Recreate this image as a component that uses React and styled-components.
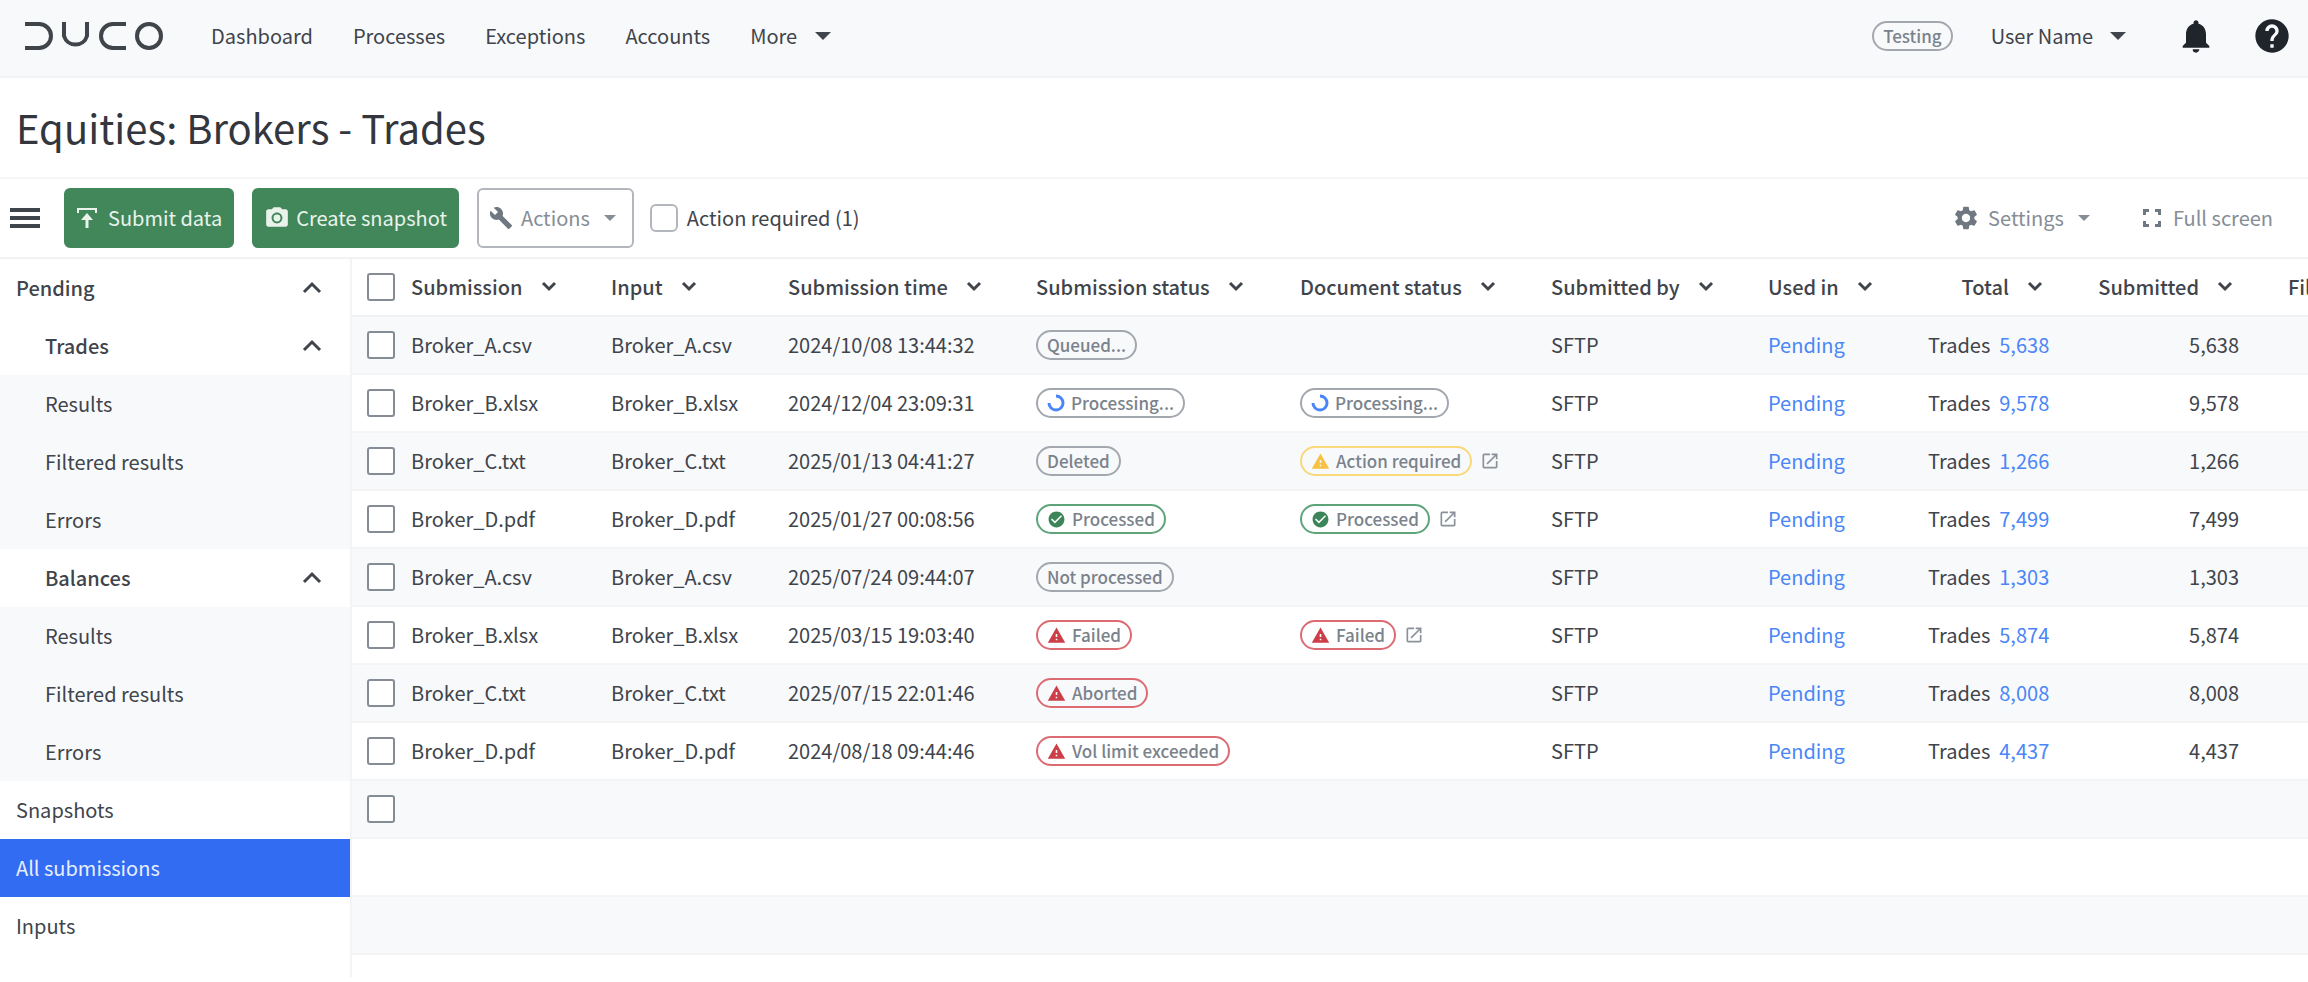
import React from "react";
import styled, { createGlobalStyle } from "styled-components";
import {
  MdNotifications,
  MdHelp,
  MdPhotoCamera,
  MdBuild,
  MdSettings,
  MdWarning,
  MdCheckCircle,
  MdOpenInNew,
} from "react-icons/md";

const GlobalStyle = createGlobalStyle`
  * {
    box-sizing: border-box;
  }
  body {
    margin: 0;
    background-color: #ffffff;
    color: #40444b;
    font-family: "Noto Sans CJK SC", "Noto Sans", sans-serif;
    font-size: 20px;
    line-height: 28px;
    overflow: hidden;
  }
  button, input {
    font: inherit;
    color: inherit;
  }
`;

const TopBar = styled.header`
  display: flex;
  align-items: center;
  height: 78px;
  padding: 0 16px 4px 24px;
  background-color: #f8f9fb;
  border-bottom: 2px solid #f0f2f4;
`;

const Logo = styled.svg`
  display: block;
  width: 140px;
  height: 30px;
  margin-right: 47px;
`;

const Nav = styled.nav`
  display: flex;
  align-items: center;
  gap: 40px;
  flex: 1;
`;

const NavLink = styled.a`
  color: inherit;
  text-decoration: none;
`;

const PlainButton = styled.button`
  display: flex;
  align-items: center;
  gap: ${(props) => props.$gap || 8}px;
  padding: 0;
  border: none;
  background: none;
  color: ${(props) => props.$color || "inherit"};
  cursor: pointer;
`;

const Caret = styled.span`
  margin-left: ${(props) => (props.$small ? 6 : 0)}px;
  border: ${(props) => (props.$small ? 6 : 8)}px solid transparent;
  border-top-color: currentColor;
  border-bottom: none;
`;

const UserArea = styled.div`
  display: flex;
  align-items: center;
  gap: 38px;
`;

const IconButtons = styled.div`
  display: flex;
  align-items: center;
  gap: 36px;
  margin-left: 12px;
  color: #20242b;
`;

const TitleBar = styled.div`
  padding: 24px 16px 25px;
  border-bottom: 2px solid #f5f6f8;
`;

const Title = styled.h1`
  margin: 0;
  font-size: 40px;
  line-height: 50px;
  font-weight: 400;
  color: #33373d;
`;

const Toolbar = styled.div`
  display: flex;
  align-items: center;
  height: 80px;
  padding: 0 35px 0 10px;
  border-bottom: 2px solid #f0f2f4;
`;

const MenuIcon = styled.svg`
  display: block;
  width: 30px;
  height: 22px;
`;

const ToolButtons = styled.div`
  display: flex;
  gap: 18px;
  margin: 0 16px 0 24px;
`;

const ToolButton = styled.button`
  display: flex;
  align-items: center;
  gap: ${(props) => props.$gap}px;
  height: 60px;
  padding: 0 ${(props) => (props.$outline ? 16 : 10)}px 0 10px;
  border: 2px solid ${(props) => (props.$outline ? "#b3b7bd" : "#42875a")};
  border-radius: 6px;
  background-color: ${(props) => (props.$outline ? "#ffffff" : "#42875a")};
  color: ${(props) => (props.$outline ? "#868d96" : "#e9f3ec")};
  cursor: pointer;
`;

const CheckLabel = styled.label`
  display: flex;
  align-items: center;
  gap: 9px;
  flex: 1;
`;

const Checkbox = styled.input.attrs({ type: "checkbox" })`
  appearance: none;
  display: block;
  width: 28px;
  height: 28px;
  margin: 0;
  border: 2px solid ${(props) => (props.$light ? "#b3b7bd" : "#858c95")};
  border-radius: ${(props) => (props.$light ? 6 : 3)}px;
  background-color: #ffffff;
  &:checked {
    background-color: #326cf3;
  }
`;

const ToolActions = styled.div`
  display: flex;
  gap: 53px;
`;

const Content = styled.div`
  display: flex;
  align-items: stretch;
`;

const Sidebar = styled.nav`
  flex: none;
  width: 352px;
  padding-bottom: 22px;
  border-right: 2px solid #f2f4f6;
`;

const SideLink = styled.a`
  display: flex;
  align-items: center;
  justify-content: space-between;
  height: 58px;
  padding: 0 26px 0 ${(props) => (props.$nested ? 45 : 16)}px;
  background-color: ${(props) =>
    props.$active ? "#326cf3" : props.$shaded ? "#f8f9fb" : "#ffffff"};
  color: ${(props) => (props.$active ? "#e8effe" : "inherit")};
  font-weight: ${(props) => (props.$heading ? 500 : 400)};
  text-decoration: none;
`;

const Chevron = styled.svg`
  display: block;
  width: ${(props) => props.$size}px;
  height: ${(props) => props.$size}px;
  fill: none;
  stroke: currentColor;
  stroke-width: ${(props) => props.$stroke};
`;

const TableArea = styled.main`
  flex: 1;
  min-width: 0;
  overflow: hidden;
`;

const Table = styled.table`
  width: 2080px;
  table-layout: fixed;
  border-collapse: separate;
  border-spacing: 0;
`;

const Row = styled.tr`
  background-color: ${(props) => (props.$shaded ? "#f8f9fb" : "#ffffff")};
`;

const HeadCell = styled.th`
  height: 58px;
  padding: 0;
  border-bottom: 2px solid #eff1f3;
  font-weight: 500;
  text-align: left;
  white-space: nowrap;
`;

const HeadLabel = styled.div`
  display: flex;
  align-items: center;
  justify-content: ${(props) => (props.$right ? "flex-end" : "flex-start")};
  gap: 12px;
`;

const Cell = styled.td`
  height: 58px;
  padding: 0;
  border-bottom: 2px solid #f2f4f6;
  text-align: ${(props) => (props.$right ? "right" : "left")};
  white-space: nowrap;
`;

const CheckWrap = styled.div`
  padding-left: 15px;
`;

const StatusLine = styled.div`
  display: flex;
  align-items: center;
  gap: 8px;
  color: #8a919a;
`;

const tones = {
  grey: "#a3a8af",
  green: "#5da47b",
  yellow: "#f9d879",
  red: "#dc6b74",
};

const Badge = styled.span`
  display: inline-flex;
  align-items: center;
  gap: 6px;
  height: 30px;
  padding: 0 9px;
  border: 2px solid ${(props) => tones[props.$tone || "grey"]};
  border-radius: 15px;
  color: #7a828b;
  font-size: 17px;
  line-height: 24px;
  font-weight: 500;
`;

const BlueLink = styled.a`
  color: #4a86f7;
  text-decoration: none;
`;

const Amount = styled.span`
  display: inline-flex;
  gap: 9px;
`;

const Spinner = () => (
  <svg width="18" height="18" viewBox="0 0 18 18" fill="none" stroke="#4a86f7" strokeWidth="3">
    <path d="M9 2a7 7 0 1 1-7 7" />
  </svg>
);

const UploadIcon = () => (
  <svg width="22" height="22" viewBox="0 0 22 22" fill="none" stroke="currentColor" strokeWidth="2">
    <path d="M2 6V2H20V6" />
    <path d="M11 21V11" strokeWidth="3" />
    <path d="M5 13L11 6L17 13Z" fill="currentColor" stroke="none" />
  </svg>
);

const FullScreenIcon = () => (
  <svg width="18" height="18" viewBox="0 0 18 18" fill="none" stroke="#6f7780" strokeWidth="3">
    <path d="M1.5 6V1.5H6M12 1.5H16.5V6M16.5 12V16.5H12M6 16.5H1.5V12" />
  </svg>
);

const DownIcon = () => (
  <Chevron $size={28} $stroke={3} viewBox="0 0 28 28">
    <path d="M8 10l6 6 6-6" />
  </Chevron>
);

const UpIcon = () => (
  <Chevron $size={24} $stroke={3} viewBox="0 0 24 24">
    <path d="M4 16l8-8 8 8" />
  </Chevron>
);

const statuses = {
  "Queued...": { tone: "grey" },
  "Processing...": { tone: "grey", icon: <Spinner /> },
  Deleted: { tone: "grey" },
  "Not processed": { tone: "grey" },
  Processed: { tone: "green", icon: <MdCheckCircle size={19} color="#3c8558" /> },
  "Action required": { tone: "yellow", icon: <MdWarning size={19} color="#f7c244" /> },
  Failed: { tone: "red", icon: <MdWarning size={19} color="#cc3f49" /> },
  Aborted: { tone: "red", icon: <MdWarning size={19} color="#cc3f49" /> },
  "Vol limit exceeded": { tone: "red", icon: <MdWarning size={19} color="#cc3f49" /> },
};

const columns = [
  { label: "Submission", width: 200 },
  { label: "Input", width: 177 },
  { label: "Submission time", width: 248 },
  { label: "Submission status", width: 264 },
  { label: "Document status", width: 251 },
  { label: "Submitted by", width: 217 },
  { label: "Used in", width: 160 },
  { label: "Total", width: 121, right: true },
  { label: "Submitted", width: 190, right: true },
];

const rows = [
  ["Broker_A.csv", "2024/10/08 13:44:32", "Queued...", "", "5,638"],
  ["Broker_B.xlsx", "2024/12/04 23:09:31", "Processing...", "Processing...", "9,578"],
  ["Broker_C.txt", "2025/01/13 04:41:27", "Deleted", "Action required", "1,266"],
  ["Broker_D.pdf", "2025/01/27 00:08:56", "Processed", "Processed", "7,499"],
  ["Broker_A.csv", "2025/07/24 09:44:07", "Not processed", "", "1,303"],
  ["Broker_B.xlsx", "2025/03/15 19:03:40", "Failed", "Failed", "5,874"],
  ["Broker_C.txt", "2025/07/15 22:01:46", "Aborted", "", "8,008"],
  ["Broker_D.pdf", "2024/08/18 09:44:46", "Vol limit exceeded", "", "4,437"],
];

const sideItems = [
  { label: "Pending", heading: true },
  { label: "Trades", heading: true, nested: true },
  { label: "Results", nested: true, shaded: true },
  { label: "Filtered results", nested: true, shaded: true },
  { label: "Errors", nested: true, shaded: true },
  { label: "Balances", heading: true, nested: true },
  { label: "Results", nested: true, shaded: true },
  { label: "Filtered results", nested: true, shaded: true },
  { label: "Errors", nested: true, shaded: true },
  { label: "Snapshots" },
  { label: "All submissions", active: true },
  { label: "Inputs" },
];

function Status({ name, linked }) {
  if (!name) return null;
  const { tone, icon } = statuses[name];
  return (
    <StatusLine>
      <Badge $tone={tone}>
        {icon}
        {name}
      </Badge>
      {linked && name !== "Processing..." && <MdOpenInNew size={20} />}
    </StatusLine>
  );
}

function Header() {
  return (
    <TopBar>
      <Logo viewBox="0 0 140 30" fill="none" stroke="#40444b" strokeWidth="4" role="img" aria-label="Duco">
        <path d="M1 3H15A12 12 0 0 1 15 27H1" />
        <path d="M40 1V15A12 12 0 0 0 63 15V1" />
        <path d="M102 3H89A12 12 0 0 0 89 27H102" />
        <circle cx="125" cy="15" r="12" />
      </Logo>
      <Nav>
        <NavLink href="#">Dashboard</NavLink>
        <NavLink href="#">Processes</NavLink>
        <NavLink href="#">Exceptions</NavLink>
        <NavLink href="#">Accounts</NavLink>
        <PlainButton $gap={18}>
          More <Caret />
        </PlainButton>
      </Nav>
      <UserArea>
        <Badge>Testing</Badge>
        <PlainButton $gap={17}>
          User Name <Caret />
        </PlainButton>
        <IconButtons>
          <PlainButton aria-label="Notifications">
            <MdNotifications size={40} />
          </PlainButton>
          <PlainButton aria-label="Help">
            <MdHelp size={40} />
          </PlainButton>
        </IconButtons>
      </UserArea>
    </TopBar>
  );
}

function Tools() {
  return (
    <Toolbar>
      <PlainButton aria-label="Menu">
        <MenuIcon viewBox="0 0 30 22" stroke="#40444b" strokeWidth="4">
          <path d="M0 3H30M0 11H30M0 19H30" />
        </MenuIcon>
      </PlainButton>
      <ToolButtons>
        <ToolButton $gap={10}>
          <UploadIcon />
          Submit data
        </ToolButton>
        <ToolButton $gap={6}>
          <MdPhotoCamera size={26} />
          Create snapshot
        </ToolButton>
        <ToolButton $gap={8} $outline>
          <MdBuild size={24} color="#6f7780" />
          Actions
          <Caret $small />
        </ToolButton>
      </ToolButtons>
      <CheckLabel>
        <Checkbox $light />
        Action required (1)
      </CheckLabel>
      <ToolActions>
        <PlainButton $color="#868d96">
          <MdSettings size={28} color="#6f7780" />
          Settings
          <Caret $small />
        </PlainButton>
        <PlainButton $color="#868d96" $gap={12}>
          <FullScreenIcon />
          Full screen
        </PlainButton>
      </ToolActions>
    </Toolbar>
  );
}

function Submissions() {
  return (
    <Table>
      <colgroup>
        <col width="59" />
        {columns.map((col) => (
          <col key={col.label} width={col.width} />
        ))}
        <col width="49" />
        <col />
      </colgroup>
      <thead>
        <Row>
          <HeadCell>
            <CheckWrap>
              <Checkbox aria-label="Select all" />
            </CheckWrap>
          </HeadCell>
          {columns.map((col) => (
            <HeadCell key={col.label}>
              <HeadLabel $right={col.right}>
                {col.label}
                <DownIcon />
              </HeadLabel>
            </HeadCell>
          ))}
          <HeadCell />
          <HeadCell>Filtered</HeadCell>
        </Row>
      </thead>
      <tbody>
        {rows.map(([file, time, status, docStatus, total], i) => (
          <Row key={i} $shaded={i % 2 === 0}>
            <Cell>
              <CheckWrap>
                <Checkbox aria-label={`Select ${file}`} />
              </CheckWrap>
            </Cell>
            <Cell>{file}</Cell>
            <Cell>{file}</Cell>
            <Cell>{time}</Cell>
            <Cell>
              <Status name={status} />
            </Cell>
            <Cell>
              <Status name={docStatus} linked />
            </Cell>
            <Cell>SFTP</Cell>
            <Cell>
              <BlueLink href="#">Pending</BlueLink>
            </Cell>
            <Cell $right>
              <Amount>
                Trades <BlueLink href="#">{total}</BlueLink>
              </Amount>
            </Cell>
            <Cell $right>{total}</Cell>
            <Cell colSpan={2} />
          </Row>
        ))}
        <Row $shaded>
          <Cell>
            <CheckWrap>
              <Checkbox aria-label="Select row" />
            </CheckWrap>
          </Cell>
          <Cell colSpan={11} />
        </Row>
        <Row>
          <Cell colSpan={12} />
        </Row>
        <Row $shaded>
          <Cell colSpan={12} />
        </Row>
      </tbody>
    </Table>
  );
}

export default function App() {
  return (
    <>
      <GlobalStyle />
      <Header />
      <TitleBar>
        <Title>Equities: Brokers - Trades</Title>
      </TitleBar>
      <Tools />
      <Content>
        <Sidebar>
          {sideItems.map((item, i) => (
            <SideLink
              key={i}
              href="#"
              $heading={item.heading}
              $nested={item.nested}
              $shaded={item.shaded}
              $active={item.active}
            >
              {item.label}
              {item.heading && <UpIcon />}
            </SideLink>
          ))}
        </Sidebar>
        <TableArea>
          <Submissions />
        </TableArea>
      </Content>
    </>
  );
}
